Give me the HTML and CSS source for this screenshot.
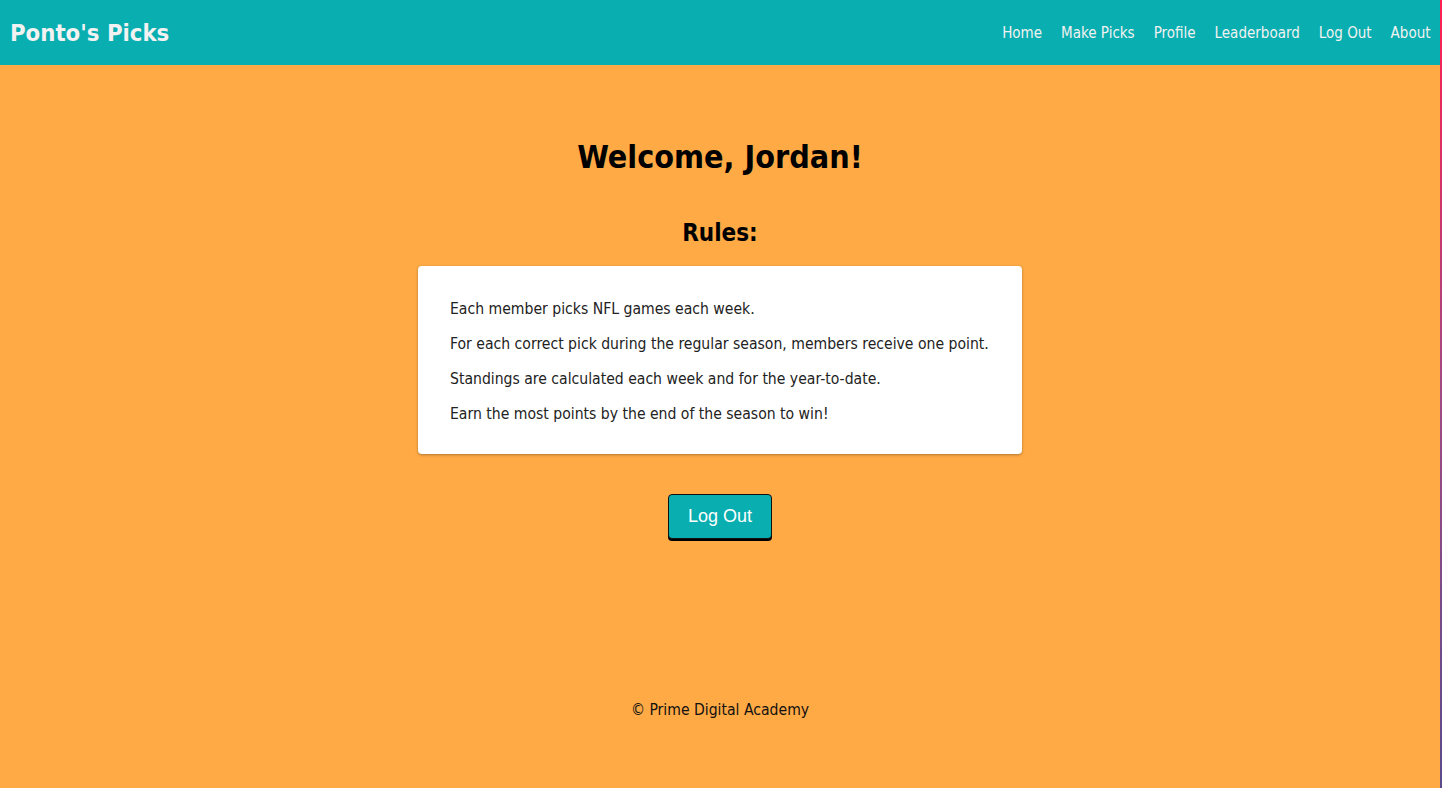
FILE: index.html
```html
<!DOCTYPE html>
<html lang="en">
<head>
<meta charset="utf-8">
<title>Ponto's Picks</title>
<link rel="stylesheet" href="styles.css">
</head>
<body>
<div class="app">
  <header class="nav">
    <h2 class="nav-title">Ponto's Picks</h2>
    <nav class="nav-links">
      <a href="#">Home</a>
      <a href="#">Make Picks</a>
      <a href="#">Profile</a>
      <a href="#">Leaderboard</a>
      <a href="#">Log Out</a>
      <a href="#">About</a>
    </nav>
  </header>
  <main class="main">
    <h1 class="welcome">Welcome, Jordan!</h1>
    <h2 class="rules-title">Rules:</h2>
    <div class="card">
      <p>Each member picks NFL games each week.</p>
      <p>For each correct pick during the regular season, members receive one point.</p>
      <p>Standings are calculated each week and for the year-to-date.</p>
      <p>Earn the most points by the end of the season to win!</p>
    </div>
    <button class="btn">Log Out</button>
  </main>
  <footer class="footer">© Prime Digital Academy</footer>
</div>
</body>
</html>
```
FILE: styles.css
```css
html, body {
  margin: 0;
  padding: 0;
  height: 100%;
}
html {
  background: linear-gradient(180deg, #ff1f4e 0%, #a04a86 50%, #5a4a8a 100%);
}
body {
  font-family: "DejaVu Sans Condensed", "DejaVu Sans", sans-serif;
  overflow: hidden;
}
.app {
  width: 1440px;
  height: 788px;
  background: #ffaa45;
  display: flex;
  flex-direction: column;
}
.nav {
  height: 65px;
  background: #09aeb0;
  display: flex;
  align-items: center;
  justify-content: space-between;
  padding: 0 0 0 10px;
}
.nav-title {
  margin: 0;
  color: #f2f2f2;
  font-size: 23.7px;
  font-weight: bold;
}
.nav-links {
  display: flex;
  align-items: center;
}
.nav-links a {
  color: #f2f2f2;
  text-decoration: none;
  font-size: 15px;
  padding: 0 9.5px;
}
.main {
  display: flex;
  flex-direction: column;
  align-items: center;
  padding-top: 72px;
}
.welcome {
  margin: 0;
  font-size: 32px;
  font-weight: bold;
  color: #000;
  line-height: 40px;
}
.rules-title {
  margin: 41px 0 0;
  font-size: 24px;
  line-height: 30px;
  color: #000;
}
.card {
  margin-top: 18px;
  width: 540px;
  background: #fff;
  border-radius: 4px;
  box-shadow: 0 1px 3px rgba(0,0,0,0.3);
  padding: 26px 32px 22px;
  color: #222;
  font-size: 15.6px;
}
.card p {
  margin: 0;
  line-height: 35px;
}
.btn {
  margin-top: 40px;
  width: 104px;
  height: 45px;
  background: #09aeb0;
  color: #fff;
  font-family: "Liberation Sans", Arial, sans-serif;
  font-size: 18px;
  border: 1px solid #111;
  border-radius: 4px;
  box-shadow: 0 2px 0 #000;
}
.footer {
  margin-top: 162px;
  text-align: center;
  font-size: 15.6px;
  color: #111;
}
```
